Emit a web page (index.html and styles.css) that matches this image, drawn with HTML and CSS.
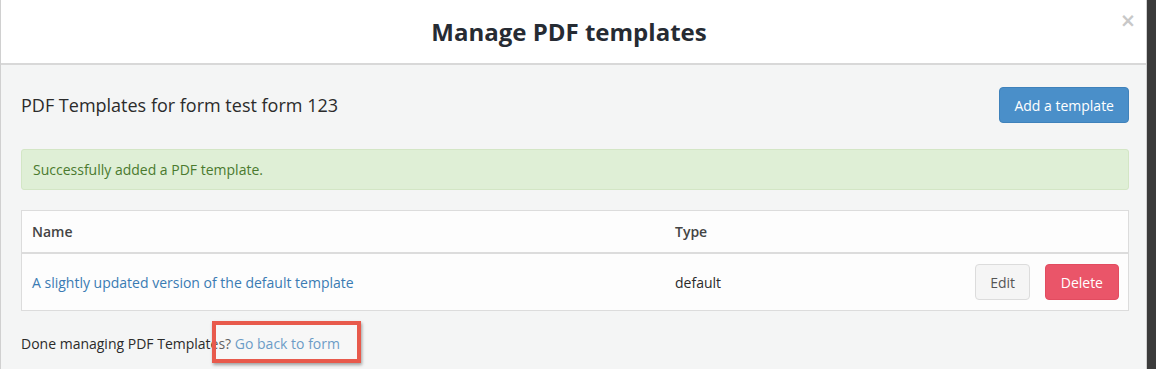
FILE: index.html
```html
<!DOCTYPE html>
<html lang="en">
<head>
  <meta charset="UTF-8" />
  <meta name="viewport" content="width=device-width, initial-scale=1.0"/>
  <title>Manage PDF templates</title>
  <link rel="stylesheet" href="styles.css">
</head>
<body>
  <div class="page">
    <div class="modal">
      <div class="modal-header">
        <h1>Manage PDF templates</h1>
        <span class="close">&times;</span>
      </div>
      <div class="modal-body">
        <div class="top-row">
          <h2>PDF Templates for form test form 123</h2>
          <button class="btn btn-primary">Add a template</button>
        </div>

        <div class="alert">Successfully added a PDF template.</div>

        <table class="templates">
          <thead>
            <tr>
              <th class="col-name">Name</th>
              <th class="col-type">Type</th>
              <th></th>
            </tr>
          </thead>
          <tbody>
            <tr>
              <td><a href="#">A slightly updated version of the default template</a></td>
              <td>default</td>
              <td class="actions">
                <button class="btn btn-default">Edit</button>
                <button class="btn btn-danger">Delete</button>
              </td>
            </tr>
          </tbody>
        </table>

        <p class="footer-note">
          Done managing PDF Templates? <a href="#">Go back to form</a>
          <span class="highlight"></span>
        </p>
      </div>
    </div>
    <div class="backdrop"></div>
  </div>
</body>
</html>
```

FILE: styles.css
```css
body {
  margin: 0;
  font-family: "Open Sans", Arial, sans-serif;
  color: #333;
}

.page {
  display: flex;
  height: 369px;
  overflow: hidden;
}

.modal {
  width: 1147px;
  background: #f4f5f5;
  border-left: 1px solid #d0d0d0;
  border-right: 1px solid #d0d0d0;
  box-sizing: border-box;
}

.backdrop {
  flex: 1;
  background: #3b3b3b;
}

.modal-header {
  position: relative;
  height: 63px;
  background: #fff;
  border-bottom: 2px solid #d8d8d8;
  display: flex;
  align-items: center;
  justify-content: center;
}

.modal-header h1 {
  margin: 0;
  font-size: 24px;
  font-weight: 700;
  color: #262b33;
  padding-right: 9px;
}

.close {
  position: absolute;
  right: 10px;
  top: 9px;
  font-size: 19px;
  font-weight: 700;
  color: #c8c8c8;
  font-family: "DejaVu Sans", sans-serif;
}

.modal-body {
  position: relative;
  padding: 22px 17px 0 20px;
}

.top-row {
  display: flex;
  justify-content: space-between;
  align-items: center;
}

.top-row h2 {
  margin: 0;
  font-size: 18px;
  font-weight: 400;
  color: #2b2b2b;
}

.btn {
  font-family: "Open Sans", Arial, sans-serif;
  font-size: 14px;
  border-radius: 4px;
  border: 1px solid transparent;
  cursor: pointer;
}

.btn-primary {
  height: 36px;
  padding: 0 14px;
  background: #4a8fc9;
  border-color: #3f82bb;
  color: #fff;
}

.btn-default {
  height: 36px;
  padding: 0 14px;
  background: #f5f5f5;
  border-color: #dcdcdc;
  color: #555;
}

.btn-danger {
  height: 36px;
  padding: 0 15px;
  background: #ea5569;
  border-color: #e24c60;
  color: #fff;
  margin-left: 11px;
}

.alert {
  margin-top: 26px;
  height: 41px;
  box-sizing: border-box;
  padding: 0 11px;
  display: flex;
  align-items: center;
  background: #dfefd6;
  border: 1px solid #d3e6c5;
  border-radius: 3px;
  color: #4a7a2e;
  font-size: 14px;
}

.templates {
  margin-top: 20px;
  width: 100%;
  border-collapse: collapse;
  background: #fdfdfd;
  border: 1px solid #dcdcdc;
  font-size: 14px;
}

.templates th {
  text-align: left;
  font-weight: 600;
  color: #444;
  height: 41px;
  padding: 0 10px;
  border-bottom: 2px solid #dcdcdc;
}

.templates .col-name {
  width: 623px;
}

.templates .col-type {
  width: 270px;
}

.templates td {
  height: 56px;
  padding: 0 10px;
  color: #2b2b2b;
}

.templates a {
  color: #3a7bb3;
  text-decoration: none;
}

.templates .actions {
  text-align: right;
  padding-right: 9px;
}

.footer-note {
  position: relative;
  margin: 23px 0 0;
  font-size: 14px;
  color: #2b2b2b;
}

.footer-note a {
  color: #3a7bb3;
  text-decoration: none;
}

/* annotation box drawn over the link */
.highlight {
  position: absolute;
  left: 191px;
  top: -13px;
  width: 141px;
  height: 34px;
  border: 4px solid #e85a4c;
  background: rgba(255, 255, 255, 0.25);
  box-shadow: 1px 2px 3px rgba(0, 0, 0, 0.35);
}
```
